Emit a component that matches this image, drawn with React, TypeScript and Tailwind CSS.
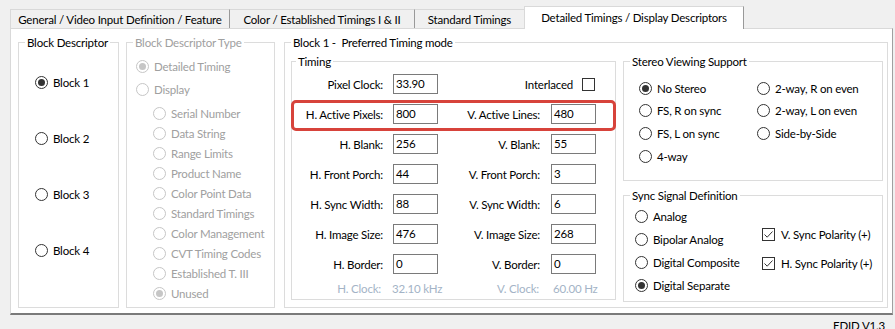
import React from 'react';

type OptProps = { label: string; checked?: boolean; disabled?: boolean };

const Radio = ({ checked, disabled }: { checked?: boolean; disabled?: boolean }) => (
    <span
        className={`flex h-[13px] w-[13px] shrink-0 items-center justify-center rounded-full border bg-white ${
            disabled ? 'border-[#c6c6c6]' : 'border-[#333333]'
        }`}
    >
        {checked && (
            <span className={`h-[7px] w-[7px] rounded-full ${disabled ? 'bg-[#c6c6c6]' : 'bg-[#333333]'}`} />
        )}
    </span>
);

const Check = ({ checked }: { checked?: boolean }) => (
    <span className="flex h-[13px] w-[13px] shrink-0 items-center justify-center border border-[#333333] bg-white">
        {checked && (
            <svg width="11" height="11" viewBox="0 0 11 11">
                <path d="M1.5 5.5 L4.2 8.2 L9.5 2.5" fill="none" stroke="#333333" strokeWidth="1" />
            </svg>
        )}
    </span>
);

const Option = ({ label, checked, disabled }: OptProps) => (
    <div className={`flex h-[20px] items-center gap-[5px] ${disabled ? 'text-[#a0a0a0]' : 'text-black'}`}>
        <Radio checked={checked} disabled={disabled} />
        <span className="whitespace-nowrap">{label}</span>
    </div>
);

const Field = ({ value }: { value: string }) => (
    <div className="h-[20px] w-[45px] shrink-0 border border-[#7a7a7a] bg-white pl-[2px] leading-[18px]">{value}</div>
);

const TimingRow = ({ l1, v1, l2, v2, children }: { l1: string; v1: string; l2: string; v2: string; children?: React.ReactNode }) => (
    <div className="relative flex h-[20px] items-center">
        <span className="w-[91px] text-right whitespace-nowrap">{l1}</span>
        <span className="ml-[10px]"><Field value={v1} /></span>
        <span className="w-[102px] text-right whitespace-nowrap">{l2}</span>
        <span className="ml-[11px]"><Field value={v2} /></span>
        {children}
    </div>
);

const timingRows = [
    { l1: 'H. Blank:', v1: '256', l2: 'V. Blank:', v2: '55' },
    { l1: 'H. Front Porch:', v1: '44', l2: 'V. Front Porch:', v2: '3' },
    { l1: 'H. Sync Width:', v1: '88', l2: 'V. Sync Width:', v2: '6' },
    { l1: 'H. Image Size:', v1: '476', l2: 'V. Image Size:', v2: '268' },
    { l1: 'H. Border:', v1: '0', l2: 'V. Border:', v2: '0' },
];

const dtdTypes = [
    'Serial Number',
    'Data String',
    'Range Limits',
    'Product Name',
    'Color Point Data',
    'Standard Timings',
    'Color Management',
    'CVT Timing Codes',
    'Established T. III',
];

const App = () => {
    return (
        <div className="h-[329px] w-[895px] overflow-hidden bg-[#f0f0f0] font-['Lato','Liberation_Sans',sans-serif] text-[11.5px] leading-[15px] tracking-[-0.2px] text-black">
            {/* Tab strip */}
            <div className="flex h-[28px] items-end pl-[10px]">
                <div className="flex h-[19px] w-[219px] items-center justify-center border-t border-l border-[#d9d9d9] whitespace-nowrap">
                    General / Video Input Definition / Feature
                </div>
                <div className="flex h-[19px] w-[185px] items-center justify-center border-t border-l border-[#d9d9d9] border-l-[#999999] whitespace-nowrap">
                    Color / Established Timings I &amp; II
                </div>
                <div className="flex h-[19px] w-[110px] items-center justify-center border-t border-l border-[#d9d9d9] border-l-[#999999] whitespace-nowrap">
                    Standard Timings
                </div>
                <div className="relative z-10 -mb-px flex h-[23px] w-[220px] items-center justify-center border-t border-l border-r border-[#d9d9d9] border-r-[#999999] bg-white pb-[2px] whitespace-nowrap">
                    Detailed Timings / Display Descriptors
                </div>
            </div>

            {/* Tab page */}
            <div className="ml-[10px] flex h-[287px] w-[883px] items-start border-t border-l border-r border-b-2 border-[#d9d9d9] border-r-[#a0a0a0] border-b-[#7a7a7a] bg-white">
                {/* Block Descriptor */}
                <fieldset className="mt-[6px] ml-[7px] h-[273px] w-[101px] border border-[#dcdcdc]">
                    <legend className="ml-[6px] px-[2px] leading-[15px]">Block Descriptor</legend>
                    <div className="flex flex-col gap-[36px] pt-[22px] pl-[16px]">
                        <Option label="Block 1" checked />
                        <Option label="Block 2" />
                        <Option label="Block 3" />
                        <Option label="Block 4" />
                    </div>
                </fieldset>

                {/* Block Descriptor Type */}
                <fieldset className="mt-[6px] ml-[7px] h-[273px] w-[149px] border border-[#dcdcdc]">
                    <legend className="ml-[6px] px-[2px] leading-[15px] text-[#a0a0a0]">Block Descriptor Type</legend>
                    <div className="flex flex-col pt-[6px] pl-[9px]">
                        <Option label="Detailed Timing" checked disabled />
                        <div className="mt-[3px]">
                            <Option label="Display" disabled />
                        </div>
                    </div>
                    <div className="mt-[4.5px] flex flex-col pl-[26px]">
                        {dtdTypes.map((t) => (
                            <Option key={t} label={t} disabled />
                        ))}
                        <Option label="Unused" checked disabled />
                    </div>
                </fieldset>

                {/* Block 1 */}
                <fieldset className="mt-[6px] ml-[9px] h-[273px] w-[604px] border border-[#dcdcdc]">
                    <legend className="ml-[6px] px-[2px] leading-[15px] whitespace-pre">Block 1 -  Preferred Timing mode</legend>
                    <div className="flex items-start pt-[4px]">
                        {/* Timing */}
                        <fieldset className="ml-[6px] h-[246px] w-[325px] border border-[#dcdcdc]">
                            <legend className="ml-[4px] px-[2px] leading-[15px]">Timing</legend>
                            <div className="flex flex-col gap-[10px] pt-[5px]">
                                <div className="flex h-[20px] items-center">
                                    <span className="w-[91px] text-right">Pixel Clock:</span>
                                    <span className="ml-[10px]"><Field value="33.90" /></span>
                                    <div className="flex w-[158px] items-center justify-end pr-[1px]">
                                        <span>Interlaced</span>
                                        <span className="ml-[9px]"><Check /></span>
                                    </div>
                                </div>
                                <TimingRow l1="H. Active Pixels:" v1="800" l2="V. Active Lines:" v2="480">
                                    <span className="absolute top-[-4px] left-[-1px] h-[31px] w-[325px] rounded-[5px] border-[3px] border-[#d7433b]" />
                                </TimingRow>
                                {timingRows.map((r) => (
                                    <TimingRow key={r.l1} {...r} />
                                ))}
                            </div>
                            <div className="mt-[4px] flex h-[20px] items-center text-[#a3b3c6]">
                                <span className="w-[91px] pr-[2px] text-right">H. Clock:</span>
                                <span className="ml-[9px] w-[46px] whitespace-nowrap">32.10 kHz</span>
                                <span className="w-[102px] pr-[1px] text-right">V. Clock:</span>
                                <span className="ml-[13px] whitespace-nowrap">60.00 Hz</span>
                            </div>
                        </fieldset>

                        <div className="ml-[7px] flex flex-col">
                            {/* Stereo */}
                            <fieldset className="h-[127px] w-[260px] border border-[#dcdcdc]">
                                <legend className="ml-[6px] px-[2px] leading-[15px]">Stereo Viewing Support</legend>
                                <div className="grid auto-rows-[22.67px] grid-cols-[118px_1fr] items-center pt-[8px] pl-[15px]">
                                    <Option label="No Stereo" checked />
                                    <Option label="2-way, R on even" />
                                    <Option label="FS, R on sync" />
                                    <Option label="2-way, L on even" />
                                    <Option label="FS, L on sync" />
                                    <Option label="Side-by-Side" />
                                    <Option label="4-way" />
                                </div>
                            </fieldset>

                            {/* Sync */}
                            <fieldset className="mt-[7px] h-[114px] w-[260px] border border-[#dcdcdc]">
                                <legend className="ml-[6px] px-[2px] leading-[15px]">Sync Signal Definition</legend>
                                <div className="flex">
                                    <div className="flex w-[138px] flex-col pt-[3.5px] pl-[11px]">
                                        <div className="h-[23px]"><Option label="Analog" /></div>
                                        <div className="h-[23px]"><Option label="Bipolar Analog" /></div>
                                        <div className="h-[23px]"><Option label="Digital Composite" /></div>
                                        <div className="h-[23px]"><Option label="Digital Separate" checked /></div>
                                    </div>
                                    <div className="flex flex-col gap-[9px] pt-[21px]">
                                        <div className="flex h-[20px] items-center gap-[6px]">
                                            <Check checked />
                                            <span className="whitespace-nowrap">V. Sync Polarity (+)</span>
                                        </div>
                                        <div className="flex h-[20px] items-center gap-[6px]">
                                            <Check checked />
                                            <span className="whitespace-nowrap">H. Sync Polarity (+)</span>
                                        </div>
                                    </div>
                                </div>
                            </fieldset>
                        </div>
                    </div>
                </fieldset>
            </div>

            {/* Status */}
            <div className="mt-[3px] flex justify-end pr-[10px]">
                <span>EDID V1.3</span>
            </div>
        </div>
    );
};

export default App;
